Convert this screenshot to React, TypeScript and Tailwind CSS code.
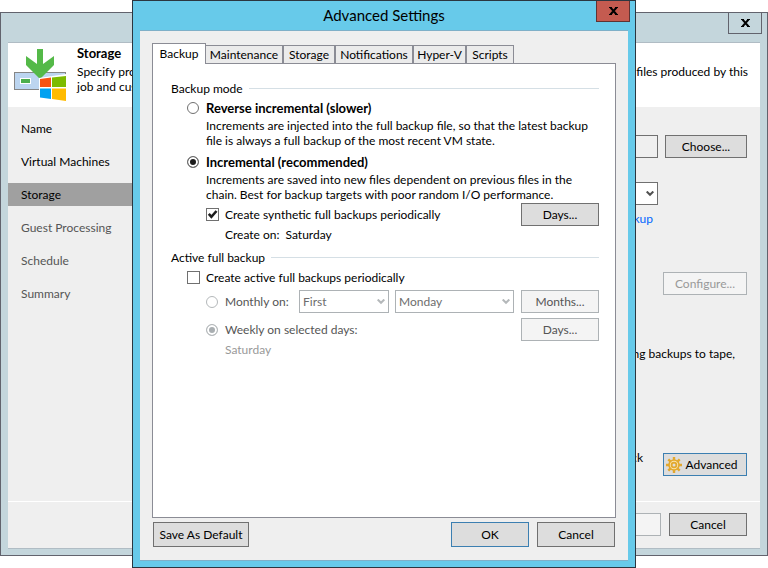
import React from "react";
import type { ReactNode } from "react";

const buttonTone = {
  normal: "border-[#707070] bg-[#dddddd] text-black",
  primary: "border-[#3c7fb1] bg-[#dddddd] text-black",
  disabled: "border-[#adb2b5] bg-[#f4f4f4] text-[#555555]",
  faded: "border-[#adb2b5] bg-[#f4f4f4] text-[#999999]",
};

function Button({
  children,
  tone = "normal",
  size = "h-[23px] w-[78px]",
}: {
  children?: ReactNode;
  tone?: keyof typeof buttonTone;
  size?: string;
}) {
  return (
    <button
      type="button"
      disabled={tone === "disabled" || tone === "faded"}
      className={`flex shrink-0 items-center justify-center gap-[3px] border whitespace-nowrap ${size} ${buttonTone[tone]}`}
    >
      {children}
    </button>
  );
}

function Chevron() {
  return (
    <svg viewBox="0 0 8 6" className="pointer-events-none absolute top-[9px] right-1 h-1.5 w-2" aria-hidden="true">
      <path d="M0.7 0.5 4 3.8 7.3 0.5" fill="none" stroke="currentColor" strokeWidth="2" />
    </svg>
  );
}

function Combo({ label, value, size }: { label: string; value: string; size: string }) {
  return (
    <div className={`relative text-[#b4b8ba] ${size}`}>
      <select
        aria-label={label}
        disabled
        className="block h-[23px] w-full appearance-none border border-[#adb2b5] bg-white pl-[3px] text-[#6d6d6d] opacity-100"
      >
        <option>{value}</option>
      </select>
      <Chevron />
    </div>
  );
}

function Radio({ id, name, checked, disabled }: { id: string; name: string; checked?: boolean; disabled?: boolean }) {
  return (
    <input
      type="radio"
      id={id}
      name={name}
      defaultChecked={checked}
      disabled={disabled}
      className="size-3 shrink-0 appearance-none rounded-full border border-[#707070] bg-white checked:bg-[#1c1c1c] checked:shadow-[inset_0_0_0_2px_white] disabled:border-[#b4b8ba] disabled:checked:bg-[#a9aeb1]"
    />
  );
}

function CheckBox({ id, checked }: { id: string; checked?: boolean }) {
  return (
    <span className="relative size-[13px] shrink-0">
      <input
        type="checkbox"
        id={id}
        defaultChecked={checked}
        className="peer block size-[13px] appearance-none border border-[#707070] bg-white"
      />
      <svg
        viewBox="0 0 13 13"
        className="pointer-events-none absolute inset-0 hidden size-[13px] peer-checked:block"
        aria-hidden="true"
      >
        <path d="M2.8 5.8 5.4 8.8 10.5 3" fill="none" stroke="#1c1c1c" strokeWidth="2.6" />
      </svg>
    </span>
  );
}

function GroupHeading({ children }: { children: ReactNode }) {
  return (
    <div className="flex h-4 items-center gap-1.5">
      <h2>{children}</h2>
      <span className="h-px flex-1 bg-[#d5dfe5]" />
    </div>
  );
}

function JobIcon() {
  return (
    <svg viewBox="0 0 52 52" className="size-[52px] shrink-0" aria-hidden="true">
      <rect x="0.5" y="23.5" width="51" height="17" fill="#bcd5f0" stroke="#868686" />
      <rect x="6.5" y="29.5" width="10" height="5" fill="#4cae4c" stroke="#ffffff" />
      <path d="M23 0h6v15l11-8v9L26 30 12 16V7l11 8Z" fill="#54b948" />
      <path d="M25 29 52 25v27L25 49Z" fill="#ffffff" />
      <path d="M26 30 37 28.5V38H26Z" fill="#f65314" />
      <path d="M38 28.5 52 27v11H38Z" fill="#7cbb00" />
      <path d="M26 39.5h11V50l-11-1.5Z" fill="#00a1f1" />
      <path d="M38 39.5h14V52l-14-2Z" fill="#ffbb00" />
    </svg>
  );
}

function GearIcon() {
  return (
    <svg viewBox="0 0 16 16" className="size-4 shrink-0" aria-hidden="true">
      <g stroke="#e2a82e" strokeWidth="2.4">
        <path d="M8 0v16M0 8h16M2.3 2.3l11.4 11.4M13.7 2.3 2.3 13.7" />
      </g>
      <circle cx="8" cy="8" r="5" fill="#fbe5ae" stroke="#e2a82e" strokeWidth="1.6" />
      <circle cx="8" cy="8" r="2.4" fill="#dddddd" stroke="#e2a82e" strokeWidth="1.8" />
    </svg>
  );
}

function CloseGlyph() {
  return (
    <svg viewBox="0 0 9 8" className="h-2 w-[9px]" aria-hidden="true">
      <path d="M1.5 0.5 7.5 7.5M7.5 0.5 1.5 7.5" stroke="#000" strokeWidth="2" />
      <path d="M0 0.5h3M6 0.5h3M0 7.5h3M6 7.5h3" stroke="#000" />
    </svg>
  );
}

const steps = [
  { name: "Name", tone: "text-black" },
  { name: "Virtual Machines", tone: "text-black" },
  { name: "Storage", tone: "bg-[#a0a0a0] text-black" },
  { name: "Guest Processing", tone: "text-[#555555]" },
  { name: "Schedule", tone: "text-[#555555]" },
  { name: "Summary", tone: "text-[#555555]" },
];

function WizardWindow() {
  return (
    <div className="flex flex-1 flex-col border border-[#62636d] bg-[#c4d6dc] px-[7px] pb-1.5">
      <div className="flex h-[29px] items-start justify-end">
        <button
          type="button"
          aria-label="Close wizard"
          className="-mr-0.5 flex h-[21px] w-[34px] items-center justify-center border border-t-0 border-[#62636d]"
        >
          <CloseGlyph />
        </button>
      </div>
      <div className="flex flex-1 flex-col border-y border-[#b0bcc4] bg-[#efefef]">
        <header className="flex h-16 gap-[11px] bg-white pt-1.5 pr-3 pl-1.5">
          <JobIcon />
          <div className="-mt-[3px] flex-1 whitespace-nowrap">
            <h1 className="text-[13px] leading-[15px] font-bold">Storage</h1>
            <div className="mt-[3px] flex justify-between">
              <p>
                Specify processing
                <br />
                job and customize
              </p>
              <p>files produced by this</p>
            </div>
          </div>
        </header>
        <div className="flex flex-1">
          <nav className="flex w-[140px] flex-col gap-2.5 pt-2.5">
            {steps.map((s) => (
              <a key={s.name} href="#" className={`flex h-[23px] items-center pl-[13px] ${s.tone}`}>
                {s.name}
              </a>
            ))}
          </nav>
          <div className="flex flex-1 flex-col items-end pt-7 pr-[13px]">
            <div className="flex gap-[7px]">
              <input
                aria-label="Backup proxy"
                readOnly
                className="h-[23px] w-40 border border-[#707070] bg-[#efefef]"
              />
              <Button size="h-[23px] w-[82px]">Choose...</Button>
            </div>
            <div className="relative mt-6 mr-[89px] w-40 text-[#505050]">
              <select
                aria-label="Backup repository"
                className="block h-[23px] w-full appearance-none border border-[#707070] bg-white"
              />
              <Chevron />
            </div>
            <a href="#" className="mt-1.5 mr-[94px] text-[#0066ff]">
              backup
            </a>
            <div className="mt-[46px]">
              <Button tone="faded" size="h-[23px] w-[84px]">
                Configure...
              </Button>
            </div>
            <p className="mt-[51px] mr-3">including backups to tape,</p>
            <div className="mt-[92px] flex gap-5">
              <p className="-mt-[3px]">block</p>
              <Button tone="primary" size="h-[23px] w-[84px] pr-1.5">
                <GearIcon />
                Advanced
              </Button>
            </div>
          </div>
        </div>
        <footer className="flex h-[47px] justify-end gap-2 border-t border-white pt-[11px] pr-[13px]">
          <Button tone="disabled" />
          <Button>Cancel</Button>
        </footer>
      </div>
    </div>
  );
}

const tabs = [
  { name: "Maintenance", size: "w-[78px]" },
  { name: "Storage", size: "w-[52px]" },
  { name: "Notifications", size: "w-[78px]" },
  { name: "Hyper-V", size: "w-[53px]" },
  { name: "Scripts", size: "w-[48px]" },
];

function BackupTab() {
  return (
    <div role="tabpanel" className="flex-1 border border-[#8b8c95] bg-white pt-4 pr-4 pl-[18px]">
      <GroupHeading>Backup mode</GroupHeading>
      <div className="mt-1 ml-4 flex h-4 items-center gap-[7px]">
        <Radio id="reverse" name="mode" />
        <label htmlFor="reverse" className="text-[13px] font-bold">
          Reverse incremental (slower)
        </label>
      </div>
      <p className="mt-0.5 ml-[35px] whitespace-nowrap">
        Increments are injected into the full backup file, so that the latest backup
        <br />
        file is always a full backup of the most recent VM state.
      </p>
      <div className="mt-1.5 ml-4 flex h-4 items-center gap-[7px]">
        <Radio id="incremental" name="mode" checked />
        <label htmlFor="incremental" className="text-[13px] font-bold">
          Incremental (recommended)
        </label>
      </div>
      <p className="mt-0.5 mb-px ml-[35px] whitespace-nowrap">
        Increments are saved into new files dependent on previous files in the
        <br />
        chain. Best for backup targets with poor random I/O performance.
      </p>
      <div className="ml-[35px] flex items-center gap-1.5">
        <CheckBox id="synthetic" checked />
        <label htmlFor="synthetic" className="flex-1">
          Create synthetic full backups periodically
        </label>
        <Button>Days...</Button>
      </div>
      <p className="ml-[54px] flex h-4 items-center gap-1.5">
        <span>Create on:</span>
        <span>Saturday</span>
      </p>
      <div className="mt-[7px]">
        <GroupHeading>Active full backup</GroupHeading>
      </div>
      <div className="mt-1 ml-4 flex h-4 items-center gap-1.5">
        <CheckBox id="active" />
        <label htmlFor="active">Create active full backups periodically</label>
      </div>
      <div className="mt-[5px] ml-[35px] flex items-center gap-[7px]">
        <Radio id="monthly" name="schedule" disabled />
        <label htmlFor="monthly" className="w-[67px] whitespace-nowrap text-[#555555]">
          Monthly on:
        </label>
        <div className="flex flex-1 gap-1.5">
          <Combo label="Week of month" value="First" size="w-[90px]" />
          <Combo label="Day of week" value="Monday" size="flex-1" />
        </div>
        <Button tone="disabled">Months...</Button>
      </div>
      <div className="mt-[5px] ml-[35px] flex items-center gap-[7px]">
        <Radio id="weekly" name="schedule" checked disabled />
        <label htmlFor="weekly" className="flex-1 text-[#555555]">
          Weekly on selected days:
        </label>
        <Button tone="disabled">Days...</Button>
      </div>
      <p className="mt-px ml-[54px] text-[#999999]">Saturday</p>
    </div>
  );
}

function SettingsDialog() {
  return (
    <div
      role="dialog"
      aria-labelledby="dialog-title"
      className="flex w-full max-w-[504px] flex-col border border-[#2b3640] bg-[#67caea] px-[7px] pb-1.5"
    >
      <div className="relative flex h-[29px] items-center justify-center">
        <h1 id="dialog-title" className="text-[15px]">
          Advanced Settings
        </h1>
        <button
          type="button"
          aria-label="Close"
          className="absolute top-0 -right-0.5 flex h-[21px] w-[34px] items-center justify-center border border-t-0 border-[#5f3333] bg-[#c45b50]"
        >
          <CloseGlyph />
        </button>
      </div>
      <div className="flex flex-1 flex-col border-y border-[#7fb0c8] bg-[#efefef] px-3 pt-3 pb-[13px]">
        <div role="tablist" className="flex items-end">
          <button
            type="button"
            role="tab"
            aria-selected="true"
            className="relative z-10 -mr-px -mb-px h-[21px] w-[54px] border border-b-0 border-[#8b8c95] bg-white pb-0.5"
          >
            Backup
          </button>
          {tabs.map((t) => (
            <button
              key={t.name}
              type="button"
              role="tab"
              aria-selected="false"
              className={`h-[18px] border border-b-0 border-[#8b8c95] bg-[#ebebeb] whitespace-nowrap ${t.size}`}
            >
              {t.name}
            </button>
          ))}
        </div>
        <BackupTab />
        <div className="mt-1 flex gap-2 px-px">
          <Button size="h-[25px] w-24">Save As Default</Button>
          <span className="flex-1" />
          <Button tone="primary" size="h-[25px] w-[78px]">
            OK
          </Button>
          <Button size="h-[25px] w-[78px]">Cancel</Button>
        </div>
      </div>
    </div>
  );
}

export default function App() {
  return (
    <div className="relative flex min-h-screen flex-col overflow-hidden bg-white py-3 font-[Lato,sans-serif] text-[12px] leading-[15px] text-black">
      <WizardWindow />
      <div className="absolute inset-0 flex justify-center">
        <SettingsDialog />
      </div>
    </div>
  );
}
